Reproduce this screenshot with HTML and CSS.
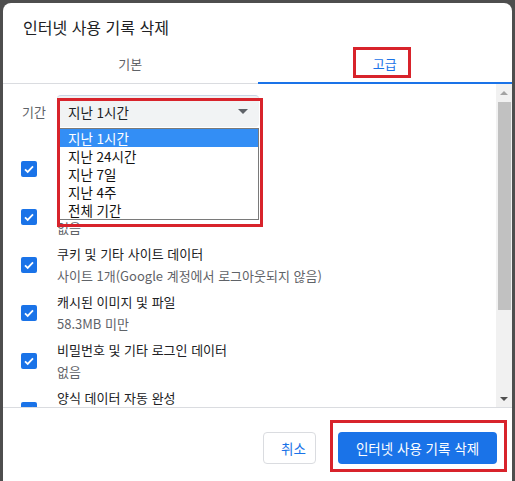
FILE: index.html
```html
<!DOCTYPE html>
<html lang="ko">
<head>
<meta charset="utf-8">
<title>인터넷 사용 기록 삭제</title>
<link rel="stylesheet" href="styles.css">
</head>
<body>
<div class="screen">
  <div class="dialog">
    <h1 class="title">인터넷 사용 기록 삭제</h1>
    <div class="tabs">
      <div class="tab">기본</div>
      <div class="tab active">고급</div>
    </div>
    <div class="body">
      <div class="scroll">
        <div class="period">
          <span class="label">기간</span>
          <div class="select"><span>지난 1시간</span><span class="arrow"></span></div>
        </div>
        <div class="row">
          <svg class="cb" viewBox="0 0 16 16"><rect width="16" height="16" rx="2" fill="#1a73e8"/><path d="M4 8.3 L6.7 10.9 L12 5.4" fill="none" stroke="#fff" stroke-width="1.8"/></svg>
          <div class="txt"><div class="t1">인터넷 사용 기록</div><div class="t2">없음</div></div>
        </div>
        <div class="row">
          <svg class="cb" viewBox="0 0 16 16"><rect width="16" height="16" rx="2" fill="#1a73e8"/><path d="M4 8.3 L6.7 10.9 L12 5.4" fill="none" stroke="#fff" stroke-width="1.8"/></svg>
          <div class="txt"><div class="t1">다운로드 기록</div><div class="t2">없음</div></div>
        </div>
        <div class="row">
          <svg class="cb" viewBox="0 0 16 16"><rect width="16" height="16" rx="2" fill="#1a73e8"/><path d="M4 8.3 L6.7 10.9 L12 5.4" fill="none" stroke="#fff" stroke-width="1.8"/></svg>
          <div class="txt"><div class="t1">쿠키 및 기타 사이트 데이터</div><div class="t2">사이트 1개(Google 계정에서 로그아웃되지 않음)</div></div>
        </div>
        <div class="row">
          <svg class="cb" viewBox="0 0 16 16"><rect width="16" height="16" rx="2" fill="#1a73e8"/><path d="M4 8.3 L6.7 10.9 L12 5.4" fill="none" stroke="#fff" stroke-width="1.8"/></svg>
          <div class="txt"><div class="t1">캐시된 이미지 및 파일</div><div class="t2">58.3MB 미만</div></div>
        </div>
        <div class="row">
          <svg class="cb" viewBox="0 0 16 16"><rect width="16" height="16" rx="2" fill="#1a73e8"/><path d="M4 8.3 L6.7 10.9 L12 5.4" fill="none" stroke="#fff" stroke-width="1.8"/></svg>
          <div class="txt"><div class="t1">비밀번호 및 기타 로그인 데이터</div><div class="t2">없음</div></div>
        </div>
        <div class="row last">
          <svg class="cb" viewBox="0 0 16 16"><rect width="16" height="16" rx="2" fill="#1a73e8"/><path d="M4 8.3 L6.7 10.9 L12 5.4" fill="none" stroke="#fff" stroke-width="1.8"/></svg>
          <div class="txt"><div class="t1">양식 데이터 자동 완성</div></div>
        </div>
      </div>
      <div class="scrollbar">
        <div class="sb-btn"><span class="tri-up"></span></div>
        <div class="sb-track"><div class="sb-thumb"></div></div>
        <div class="sb-btn"><span class="tri-down"></span></div>
      </div>
    </div>
    <div class="footer">
      <button class="btn cancel">취소</button>
      <button class="btn primary">인터넷 사용 기록 삭제</button>
    </div>
  </div>

  <ul class="dropdown">
    <li class="opt selected">지난 1시간</li>
    <li class="opt">지난 24시간</li>
    <li class="opt">지난 7일</li>
    <li class="opt">지난 4주</li>
    <li class="opt">전체 기간</li>
  </ul>

  <div class="mark mark-tab"></div>
  <div class="mark mark-select"></div>
  <div class="mark mark-btn"></div>
</div>
</body>
</html>
```

FILE: styles.css
```css
* { box-sizing: border-box; }

html, body {
  margin: 0;
  padding: 0;
  background: #4e4e4e;
}

body {
  font-family: "Noto Sans CJK KR", "Noto Sans", "Liberation Sans", sans-serif;
  width: 515px;
  height: 481px;
  overflow: hidden;
}

.screen {
  position: relative;
  width: 515px;
  height: 481px;
  padding: 3px 3px 0 3px;
}

.dialog {
  width: 509px;
  height: 478px;
  background: #fff;
  border-radius: 8px 8px 0 0;
  display: flex;
  flex-direction: column;
  overflow: hidden;
}

.title {
  margin: 0;
  padding: 12px 0 0 20px;
  font-size: 16px;
  line-height: 24px;
  font-weight: 400;
  color: #202124;
}

.tabs {
  margin-top: 5px;
  height: 40px;
  display: flex;
  border-bottom: 1px solid #dadce0;
}

.tab {
  flex: 1;
  position: relative;
  display: flex;
  align-items: center;
  justify-content: center;
  font-size: 13px;
  color: #5f6368;
}

.tab.active {
  color: #1a73e8;
}

.tab.active::after {
  content: "";
  position: absolute;
  left: 0;
  right: 0;
  bottom: -1px;
  height: 2px;
  background: #1a73e8;
}

.body {
  height: 323px;
  display: flex;
}

.scroll {
  flex: 1;
  overflow: hidden;
  padding: 11px 0 0 18px;
}

.period {
  display: flex;
  align-items: center;
  height: 32px;
}

.label {
  width: 35px;
  margin-left: 1px;
  font-size: 13px;
  color: #5f6368;
}

.select {
  width: 202px;
  height: 32px;
  background: #f1f3f4;
  border-radius: 4px;
  border-top: 1px solid #c9d5e6;
  display: flex;
  align-items: center;
  justify-content: space-between;
  padding: 0 11px;
  font-size: 13.5px;
  color: #202124;
}

.arrow {
  width: 0;
  height: 0;
  border-left: 5px solid transparent;
  border-right: 5px solid transparent;
  border-top: 5px solid #5f6368;
}

.row {
  height: 48px;
  display: flex;
  align-items: center;
}

.row.last {
  align-items: flex-start;
  padding-top: 2px;
}

.row.last .cb {
  margin-top: 15px;
}

.period + .row {
  margin-top: 18px;
}

.cb {
  width: 16px;
  height: 16px;
  flex: none;
  margin-right: 20px;
}

.txt {
  line-height: 22px;
  font-size: 13px;
}

.t1 { color: #202124; }
.t2 { color: #5f6368; }

.scrollbar {
  width: 16px;
  background: #f1f1f1;
  display: flex;
  flex-direction: column;
}

.sb-btn {
  height: 17px;
  display: flex;
  align-items: center;
  justify-content: center;
}

.tri-up {
  width: 0;
  height: 0;
  border-left: 4px solid transparent;
  border-right: 4px solid transparent;
  border-bottom: 4px solid #a3a3a3;
}

.tri-down {
  width: 0;
  height: 0;
  border-left: 4px solid transparent;
  border-right: 4px solid transparent;
  border-top: 4px solid #505050;
}

.sb-track {
  flex: 1;
  padding: 1px 1px 0 2px;
}

.sb-thumb {
  height: 208px;
  background: #c1c1c1;
}

.footer {
  border-top: 1px solid #dadce0;
  padding: 24px 15px 16px 0;
  display: flex;
  justify-content: flex-end;
  gap: 22px;
}

.btn {
  height: 32px;
  border-radius: 4px;
  font-family: inherit;
  font-size: 13.5px;
  padding: 0;
  cursor: pointer;
}

.cancel {
  width: 53px;
  padding-left: 8px;
  background: #fff;
  border: 1px solid #dadce0;
  color: #1a73e8;
}

.primary {
  width: 159px;
  background: #1a73e8;
  border: none;
  color: #fff;
}

.dropdown {
  position: absolute;
  left: 59px;
  top: 128px;
  width: 200px;
  margin: 0;
  padding: 0;
  list-style: none;
  background: #fff;
  border: 1px solid #7a7a7a;
  font-size: 13.5px;
  color: #111;
}

.opt {
  height: 18px;
  line-height: 18px;
  padding-left: 8px;
}

.opt.selected {
  background: #338ef5;
  color: #fff;
}

.mark {
  position: absolute;
  border: 3px solid #d8232b;
}

.mark-tab {
  left: 353px;
  top: 47px;
  width: 58px;
  height: 31px;
}

.mark-select {
  left: 57px;
  top: 98px;
  width: 206px;
  height: 129px;
}

.mark-btn {
  left: 330px;
  top: 420px;
  width: 177px;
  height: 52px;
}
```
